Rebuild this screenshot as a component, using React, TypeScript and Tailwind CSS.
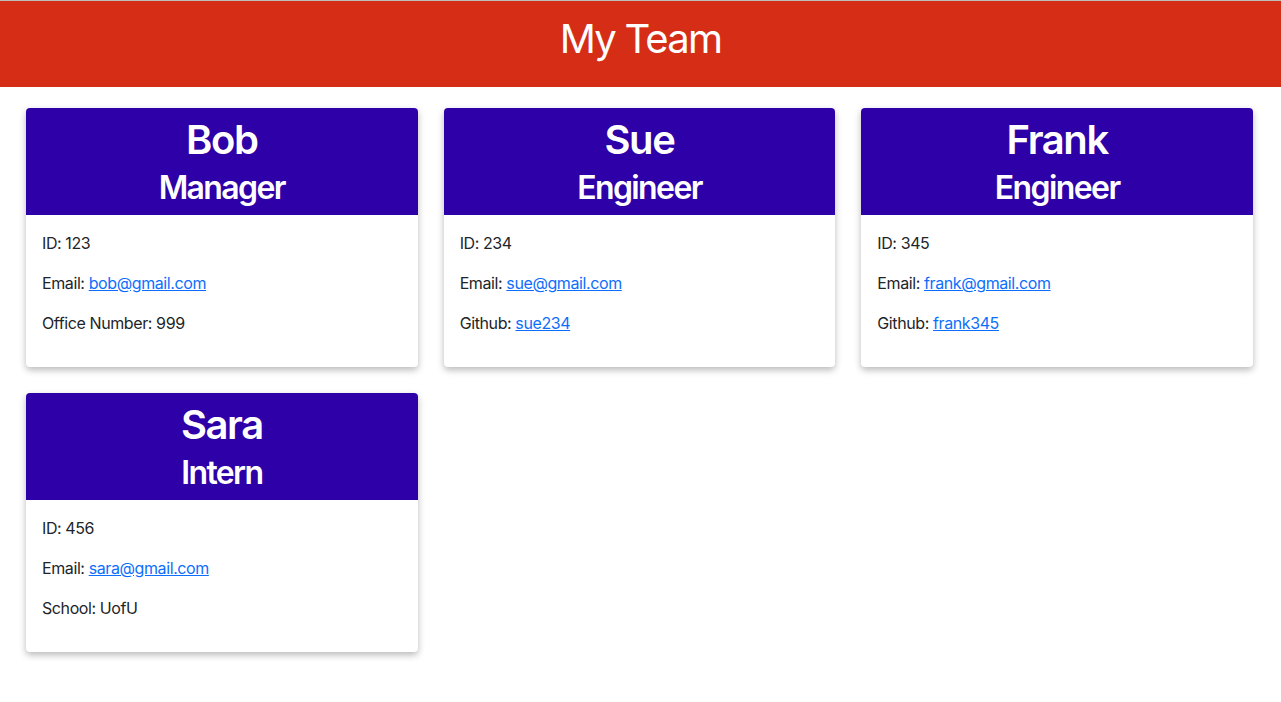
import React from "react";

type Member = {
  name: string;
  role: string;
  id: string;
  email: string;
  extraLabel: string;
  extraValue: string;
  extraLink?: boolean;
};

const members: Member[] = [
  { name: "Bob", role: "Manager", id: "123", email: "bob@gmail.com", extraLabel: "Office Number", extraValue: "999" },
  { name: "Sue", role: "Engineer", id: "234", email: "sue@gmail.com", extraLabel: "Github", extraValue: "sue234", extraLink: true },
  { name: "Frank", role: "Engineer", id: "345", email: "frank@gmail.com", extraLabel: "Github", extraValue: "frank345", extraLink: true },
  { name: "Sara", role: "Intern", id: "456", email: "sara@gmail.com", extraLabel: "School", extraValue: "UofU" },
];

function Card({ m }: { m: Member }) {
  return (
    <div className="flex flex-col rounded-[4px] bg-white shadow-[0_3px_7px_rgba(0,0,0,0.28)]">
      <div className="flex flex-col items-center rounded-t-[4px] bg-[#2e00a8] pt-[8px] pb-[8px] text-white">
        <div className="text-[40px] leading-[48px] font-semibold tracking-[-0.035em]">{m.name}</div>
        <div className="mt-[5px] text-[32px] leading-[38px] font-semibold tracking-[-0.05em]">{m.role}</div>
      </div>
      <div className="flex flex-col gap-[16px] p-[16px] pb-[32px] text-[16px] leading-[24px] tracking-[-0.025em] text-[#212529]">
        <p>ID: {m.id}</p>
        <p>
          Email: <a href="#" className="text-[#0d6efd] underline">{m.email}</a>
        </p>
        <p>
          {m.extraLabel}:{" "}
          {m.extraLink ? (
            <a href="#" className="text-[#0d6efd] underline">{m.extraValue}</a>
          ) : (
            m.extraValue
          )}
        </p>
      </div>
    </div>
  );
}

export default function App() {
  return (
    <div className="min-h-[702px] bg-white font-['Inter',sans-serif]">
      <header className="border-t border-[#bdbdbd] bg-[#d52d16] pt-[14px] pb-[24px] text-center">
        <h1 className="text-[40px] leading-[48px] font-normal tracking-[-0.045em] text-white">My Team</h1>
      </header>
      <main className="grid grid-cols-3 gap-x-[26px] gap-y-[26px] pt-[21px] pl-[26px] pr-[28px]">
        {members.map((m) => (
          <Card key={m.name} m={m} />
        ))}
      </main>
    </div>
  );
}
